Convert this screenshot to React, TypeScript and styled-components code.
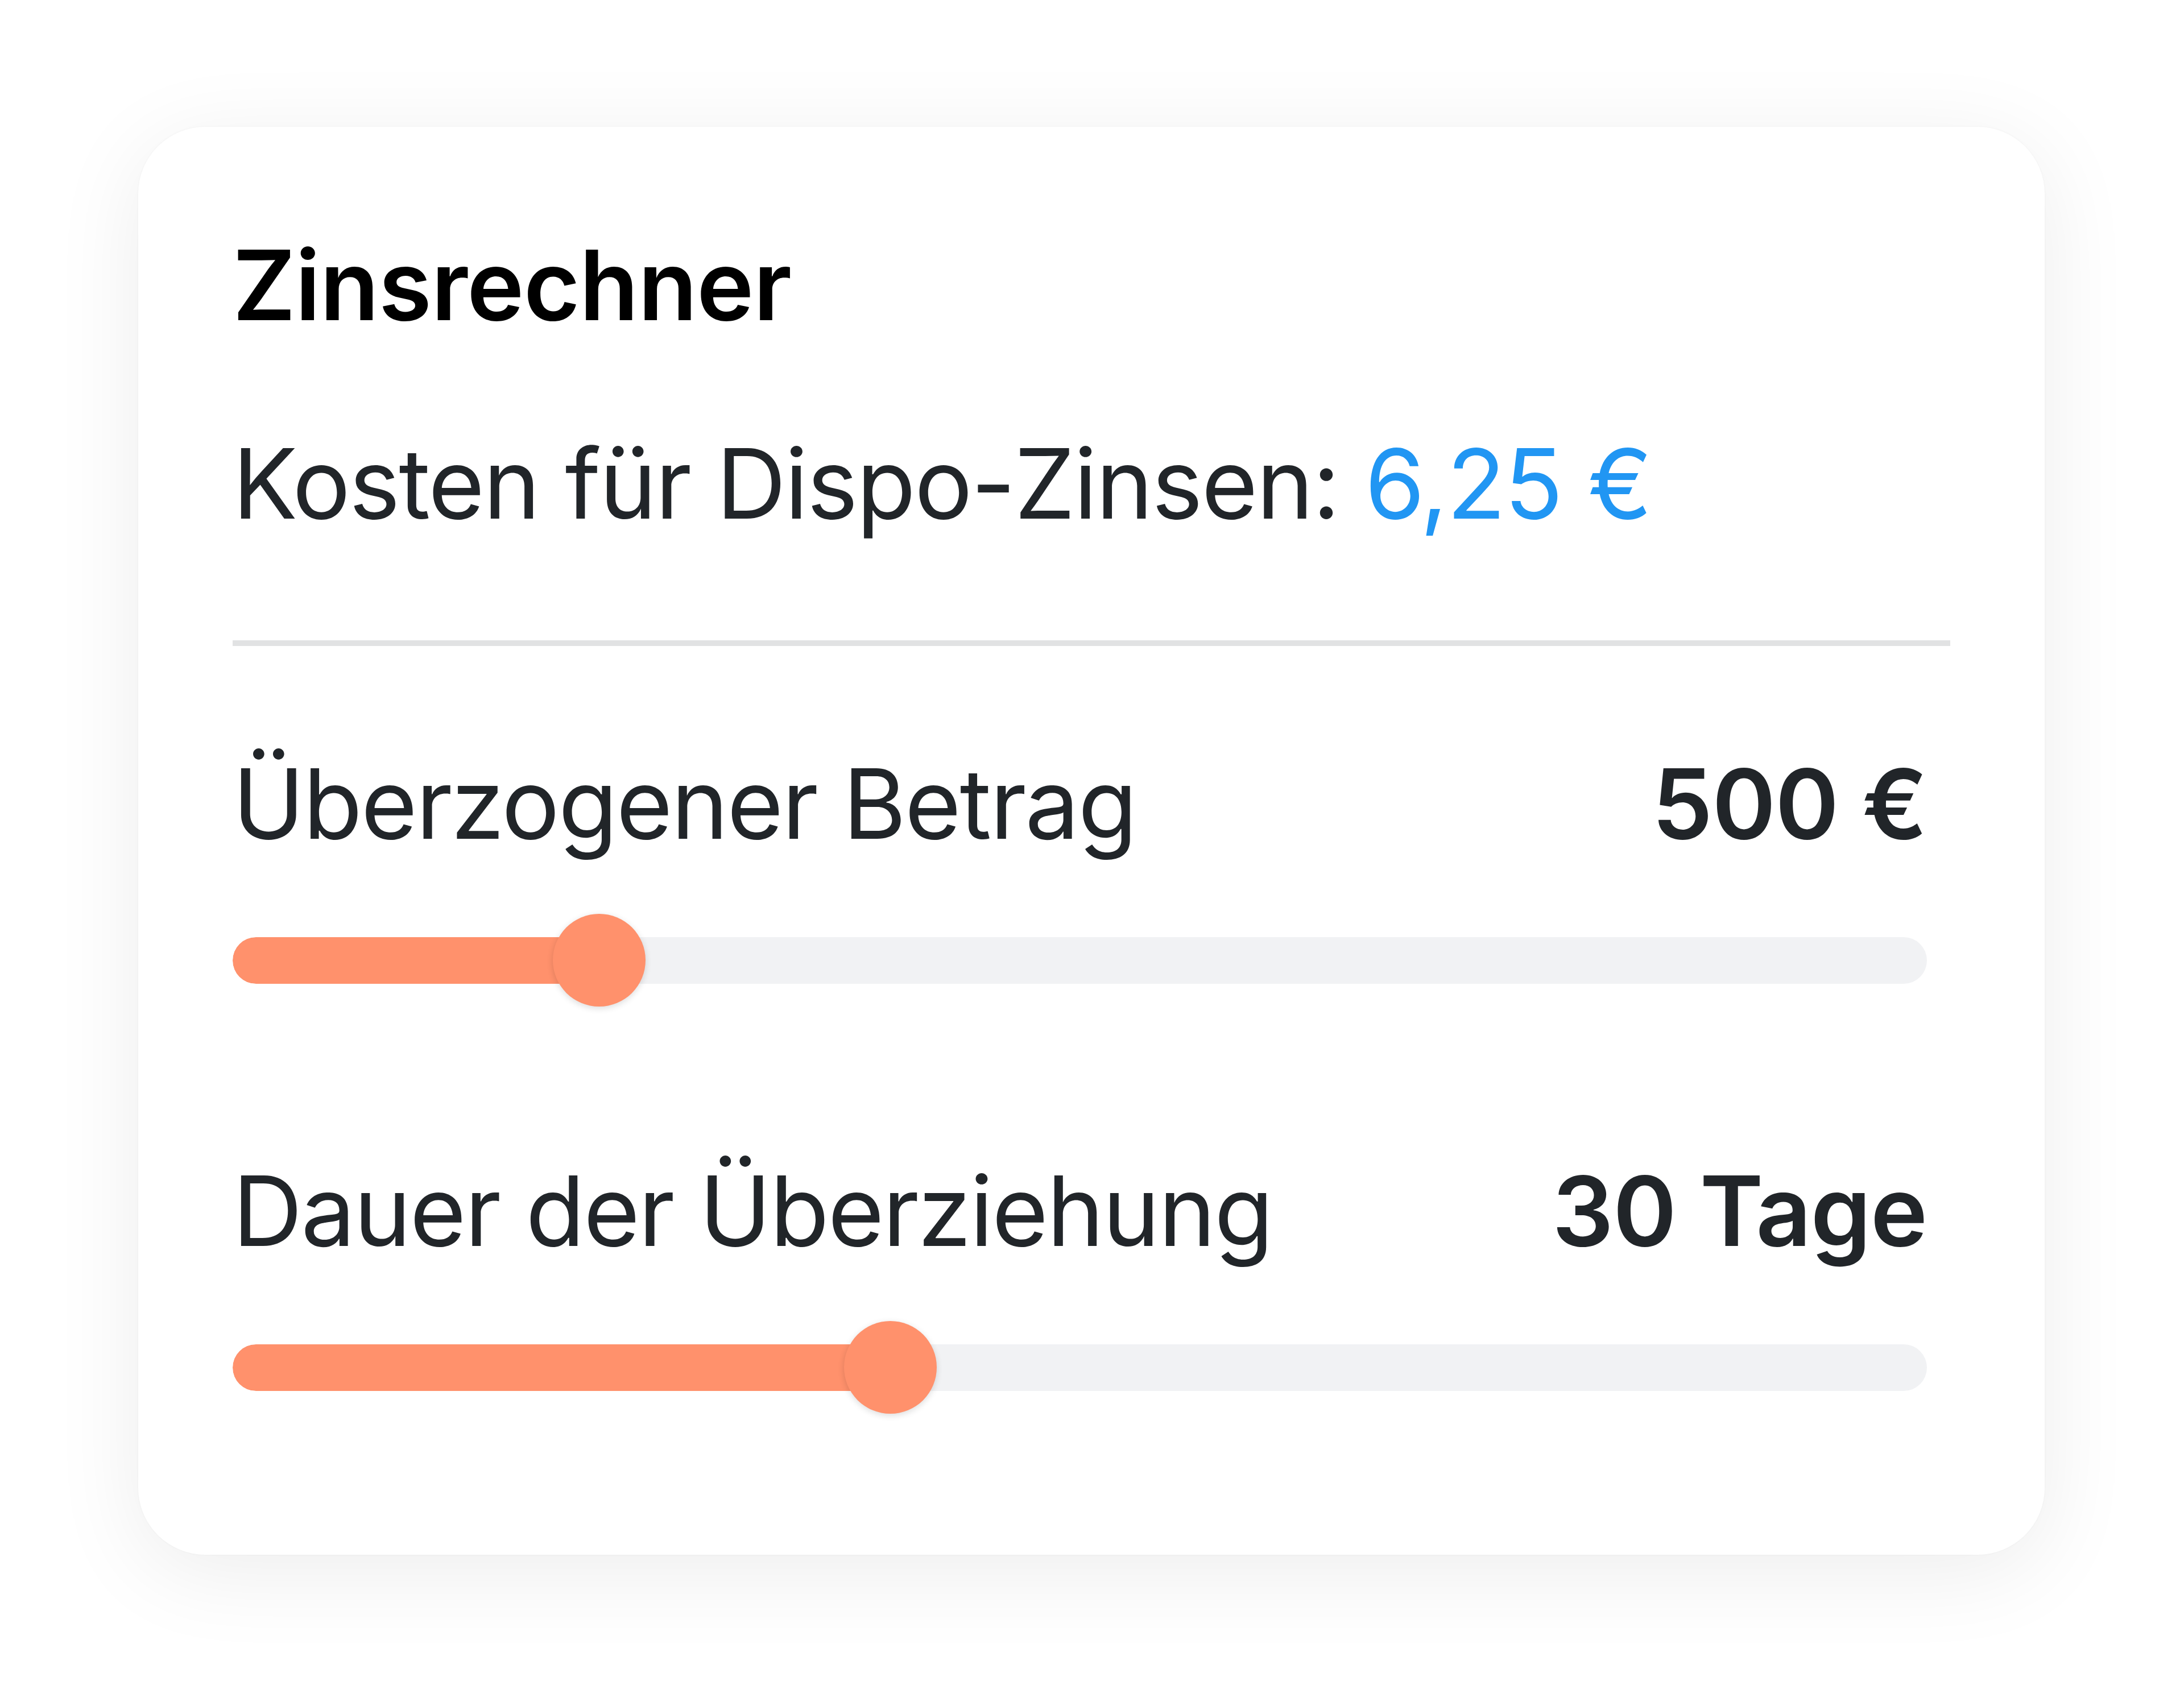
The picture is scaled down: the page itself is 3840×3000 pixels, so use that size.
import React from "react";
import styled, { createGlobalStyle } from "styled-components";

const GlobalStyle = createGlobalStyle`
  html, body {
    margin: 0;
    padding: 0;
    background: #ffffff;
  }
  body {
    font-family: Inter, "Noto Sans", "Liberation Sans", sans-serif;
    -webkit-font-smoothing: antialiased;
  }
`;

const Page = styled.div`
  width: 3840px;
  height: 3000px;
  box-sizing: border-box;
  padding: 223px 0 0 243px;
  background: #ffffff;
`;

const Card = styled.section`
  width: 3352px;
  box-sizing: border-box;
  padding: 176px 166px 248px 166px;
  background: #ffffff;
  border-radius: 118px;
  box-shadow: 0 30px 160px rgba(0, 0, 0, 0.075), 0 0 0 2px rgba(0, 0, 0, 0.012);
  display: flex;
  flex-direction: column;
`;

const Title = styled.h1`
  margin: 0;
  font-size: 170px;
  line-height: 204px;
  font-weight: 600;
  letter-spacing: -0.9px;
  color: #000000;
`;

const Cost = styled.p`
  margin: 145px 0 0 0;
  font-size: 170px;
  line-height: 204px;
  font-weight: 400;
  letter-spacing: -2.3px;
  color: #212529;
`;

const Amount = styled.span`
  color: #2196f3;
`;

const Divider = styled.hr`
  margin: 174px 0 0 0;
  border: none;
  height: 10px;
  background: #e1e2e3;
`;

const Controls = styled.div`
  display: flex;
  flex-direction: column;
  padding-right: 41px;
  margin-top: 175px;
  gap: 257px;
`;

const Control = styled.div`
  display: flex;
  flex-direction: column;
  gap: 92px;
`;

const LabelRow = styled.div`
  display: flex;
  justify-content: space-between;
  align-items: baseline;
  font-size: 170px;
  line-height: 204px;
  color: #212529;
`;

const Label = styled.span`
  font-weight: 400;
  letter-spacing: -2.4px;
`;

const Value = styled.span`
  font-weight: 600;
  letter-spacing: -1.2px;
`;

const THUMB = 163;

const Slider = styled.div`
  position: relative;
  height: ${THUMB}px;
  display: flex;
  align-items: center;
`;

const Track = styled.div`
  width: 100%;
  height: 82px;
  border-radius: 41px;
  background: #f1f2f4;
  overflow: hidden;
`;

const Fill = styled.div`
  height: 100%;
  background: #ff916c;
  border-radius: 41px 0 0 41px;
`;

const Thumb = styled.div`
  position: absolute;
  top: 0;
  width: ${THUMB}px;
  height: ${THUMB}px;
  border-radius: 50%;
  background: #ff916c;
  box-shadow: 0 3px 12px rgba(0, 0, 0, 0.14);
`;

type RangeProps = { ratio: number };

function Range({ ratio }: RangeProps) {
  const pos = `calc(${ratio} * (100% - ${THUMB}px))`;
  return (
    <Slider>
      <Track>
        <Fill style={{ width: `calc(${pos} + ${THUMB / 2}px)` }} />
      </Track>
      <Thumb style={{ left: pos }} />
    </Slider>
  );
}

export default function App() {
  return (
    <>
      <GlobalStyle />
      <Page>
        <Card>
          <Title>Zinsrechner</Title>
          <Cost>
            Kosten für Dispo-Zinsen: <Amount>6,25 €</Amount>
          </Cost>
          <Divider />
          <Controls>
            <Control>
              <LabelRow>
                <Label>Überzogener Betrag</Label>
                <Value>500 €</Value>
              </LabelRow>
              <Range ratio={0.2} />
            </Control>
            <Control>
              <LabelRow>
                <Label>Dauer der Überziehung</Label>
                <Value>30 Tage</Value>
              </LabelRow>
              <Range ratio={0.3818} />
            </Control>
          </Controls>
        </Card>
      </Page>
    </>
  );
}
